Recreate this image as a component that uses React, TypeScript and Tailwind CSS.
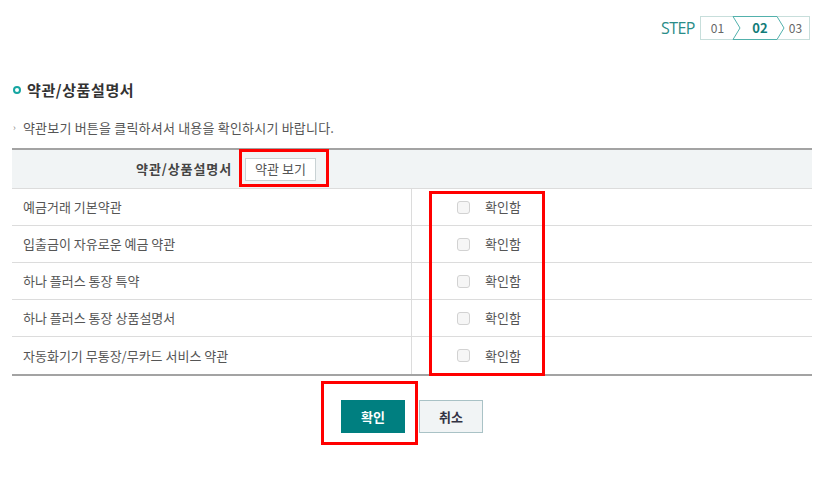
import React from 'react'

const terms = [
    '예금거래 기본약관',
    '입출금이 자유로운 예금 약관',
    '하나 플러스 통장 특약',
    '하나 플러스 통장 상품설명서',
    '자동화기기 무통장/무카드 서비스 약관',
]

function StepBox() {
    return (
        <div className="flex items-center justify-end pr-[14px] pt-4">
            <span className="mr-[5px] text-[16px] leading-none text-[#2a8c88] tracking-[-0.5px]" style={{ fontFamily: '"Liberation Sans Narrow", "Open Sans", sans-serif' }}>
                STEP
            </span>
            <div className="relative flex h-[24px] w-[110px] border border-[#c7dedb] text-[12px] text-[#666]">
                <span className="flex w-[33px] items-center justify-center">01</span>
                <span className="flex w-[46px] items-center justify-center pl-[6px] font-bold text-[13px] text-[#137c79]">02</span>
                <span className="flex flex-1 items-center justify-center pl-[2px]">03</span>
                {/* 진행중 단계 화살표 */}
                <svg className="absolute -top-px left-[31px]" width="56" height="24" viewBox="0 0 56 24">
                    <path d="M1 0.5 H45 L52 12 L45 23.5 H1 L8 12 Z" fill="none" stroke="#52b1ac" strokeWidth="1" />
                </svg>
            </div>
        </div>
    )
}

export default function App() {
    return (
        <div
            className="relative h-[486px] w-[824px] bg-white text-[#555]"
            style={{ fontFamily: '"Noto Sans CJK KR", "Noto Sans", sans-serif' }}
        >
            <StepBox />

            {/* 제목 */}
            <div className="mt-[42px] flex items-center px-3">
                <span className="ml-[1px] h-[8px] w-[8px] rounded-full border-[2px] border-[#16a6a2]" />
                <h2 className="ml-[6px] text-[15px] font-bold leading-[16px] tracking-[0.6px] text-[#333]">약관/상품설명서</h2>
            </div>

            <p className="mt-[22px] flex items-center px-3 text-[13px] leading-[16px] tracking-[0.2px] text-[#555]">
                <span className="ml-[1px] mr-[7px] text-[9px] text-[#888]">›</span>
                약관보기 버튼을 클릭하셔서 내용을 확인하시기 바랍니다.
            </p>

            {/* 약관 테이블 */}
            <div className="mx-3 mt-[12px] border-t-2 border-b-2 border-[#a3a3a3]">
                <div className="flex h-[39px] items-center border-b border-[#dcdcdc] bg-[#f1f4f5]">
                    <div className="w-[220px] text-right text-[13px] font-bold tracking-[0.9px] text-[#444]">약관/상품설명서</div>
                    <button className="ml-[13px] h-[23px] w-[71px] border border-[#c9d2d4] bg-white text-[13px] text-[#555]">
                        약관 보기
                    </button>
                </div>
                {terms.map((t, i) => (
                    <div
                        key={t}
                        className={`flex h-[37px] items-center text-[13px] ${i < terms.length - 1 ? 'border-b border-[#dcdcdc]' : ''}`}
                    >
                        <div className="flex h-full w-[400px] items-center border-r border-[#dcdcdc] pl-[11px]">{t}</div>
                        <label className="flex items-center pl-[45px]">
                            <span className="h-[13px] w-[13px] rounded-[3px] border border-[#d2d2d2] bg-[#f6f6f6]" />
                            <span className="ml-[15px]">확인함</span>
                        </label>
                    </div>
                ))}
            </div>

            <div className="mt-[24px] flex justify-center gap-[14px]">
                <button className="h-[33px] w-[64px] bg-[#007f80] text-[13px] font-bold text-white">확인</button>
                <button className="h-[33px] w-[64px] border border-[#a9c2c6] bg-[#f1f4f5] text-[13px] font-bold text-[#334]">취소</button>
            </div>

            {/* 강조 표시 */}
            <div className="absolute left-[239px] top-[149px] h-[38px] w-[90px] border-[3px] border-[#ff0000]" />
            <div className="absolute left-[429px] top-[191px] h-[185px] w-[116px] border-[3px] border-[#ff0000]" />
            <div className="absolute left-[321px] top-[381px] h-[64px] w-[97px] border-[3px] border-[#ff0000]" />
        </div>
    )
}
